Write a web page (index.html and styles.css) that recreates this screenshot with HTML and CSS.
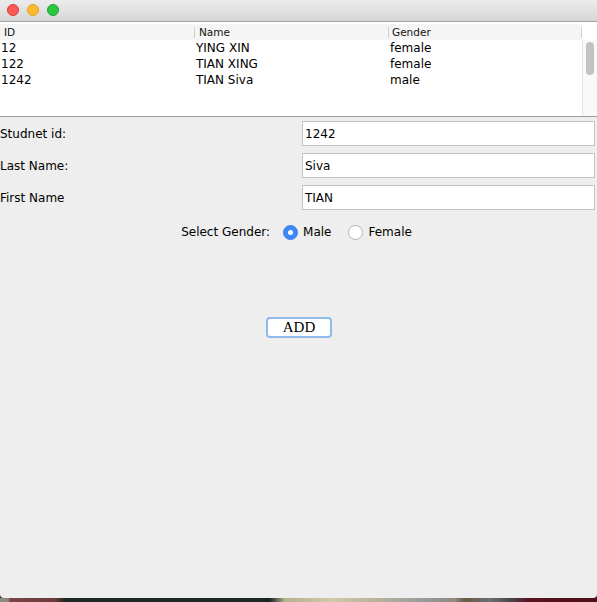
FILE: index.html
```html
<!DOCTYPE html>
<html>
<head>
<meta charset="utf-8">
<title>Student Form</title>
<link rel="stylesheet" href="styles.css">
</head>
<body>
<div class="desktop">
  <div class="window">
    <div class="titlebar">
      <span class="light red"></span>
      <span class="light yellow"></span>
      <span class="light green"></span>
    </div>
    <div class="scrollpane">
      <div class="table">
        <div class="thead">
          <div class="th">ID</div>
          <div class="th">Name</div>
          <div class="th">Gender</div>
        </div>
        <div class="tr"><div class="td">12</div><div class="td">YING XIN</div><div class="td">female</div></div>
        <div class="tr"><div class="td">122</div><div class="td">TIAN XING</div><div class="td">female</div></div>
        <div class="tr"><div class="td">1242</div><div class="td">TIAN Siva</div><div class="td">male</div></div>
      </div>
      <div class="vscroll"><div class="thumb"></div></div>
    </div>
    <div class="form">
      <div class="fields">
        <label class="label">Studnet id:</label>
        <div class="field">1242</div>
        <label class="label">Last Name:</label>
        <div class="field">Siva</div>
        <label class="label">First Name</label>
        <div class="field">TIAN</div>
      </div>
      <div class="gender">
        <span class="glabel">Select Gender:</span>
        <span class="radio checked"></span>
        <span class="rtext">Male</span>
        <span class="radio"></span>
        <span class="rtext">Female</span>
      </div>
      <div class="actions">
        <button class="add">ADD</button>
      </div>
    </div>
  </div>
  <div class="strip"></div>
</div>
</body>
</html>
```
FILE: styles.css
```css
* { box-sizing: border-box; }
html, body { margin: 0; padding: 0; }
body {
  width: 597px;
  height: 602px;
  overflow: hidden;
  background: #2a2a2a;
  font-family: "DejaVu Sans", "Liberation Sans", sans-serif;
  font-size: 12px;
  color: #000;
}
.desktop { display: flex; flex-direction: column; width: 597px; height: 602px; }
.window {
  width: 597px;
  height: 598px;
  background: #eeeeee;
  display: flex;
  flex-direction: column;
  border-radius: 0 0 4px 4px;
  overflow: hidden;
}
.strip {
  height: 4px;
  background: linear-gradient(90deg, #8a8a86 0px, #8a8a86 8px, #7a4444 10px, #6a3a3a 55px, #1d2824 65px, #1b2622 270px, #b8b090 285px, #cfc9a8 330px, #b5b19c 380px, #9c9c9c 420px, #8d8a84 455px, #6b5a40 465px, #6a7078 490px, #4a3a40 515px, #5a1222 530px, #4a0e1a 597px);
}
.titlebar {
  height: 22px;
  background: linear-gradient(#ececec, #d6d6d6);
  border-bottom: 1px solid #a3a3a3;
  display: flex;
  align-items: center;
  gap: 8px;
  padding: 0 0 1px 7px;
}
.light { width: 12px; height: 12px; border-radius: 50%; display: block; }
.red { background: #fc5753; border: 0.5px solid #df3d3a; }
.yellow { background: #fdbc2e; border: 0.5px solid #de9f22; }
.green { background: #2ac840; border: 0.5px solid #1ea630; }

.scrollpane {
  height: 95px;
  background: #fff;
  border-bottom: 1px solid #9c9c9c;
  display: grid;
  grid-template-columns: 582px 15px;
  padding-top: 2px;
}
.table { display: flex; flex-direction: column; }
.thead {
  display: grid;
  grid-template-columns: 195px 194px 193px;
  height: 16px;
  background: #f5f5f5;
}
.th {
  font-size: 10.5px;
  line-height: 16px;
  padding-left: 4px;
  color: #111;
  background: linear-gradient(#cfcfcf, #cfcfcf) right center / 1px 11px no-repeat;
}
.th:nth-child(3) { padding-left: 3px; }
.tr {
  display: grid;
  grid-template-columns: 195px 194px 193px;
  height: 16px;
}
.td { line-height: 16px; padding-left: 1px; white-space: nowrap; }
.vscroll {
  margin-top: 16px;
  background: #f9f9f9;
  border-left: 1px solid #e6e6e6;
  padding: 2px 0 0 3px;
}
.thumb {
  width: 8px;
  height: 33px;
  border-radius: 4px;
  background: #c2c2c2;
}

.form { display: flex; flex-direction: column; padding-top: 4px; }
.fields {
  display: grid;
  grid-template-columns: 302px 293px;
  grid-auto-rows: 25px;
  row-gap: 7px;
}
.label { display: flex; align-items: center; padding-left: 0; white-space: nowrap; }
.field {
  background: #fff;
  border: 1px solid #c3c3c3;
  display: flex;
  align-items: center;
  padding-left: 2px;
}
.gender {
  margin-top: 11px;
  height: 22px;
  display: flex;
  align-items: center;
  justify-content: center;
  padding-right: 4px;
}
.glabel { margin-right: 13px; }
.radio {
  width: 15px;
  height: 15px;
  border-radius: 50%;
  background: #fff;
  border: 1px solid #b3b3b3;
  margin-right: 5px;
  display: flex;
  align-items: center;
  justify-content: center;
}
.radio.checked { background: #3b88f6; border-color: #3a80ea; }
.radio.checked::after {
  content: "";
  width: 5px;
  height: 5px;
  border-radius: 50%;
  background: #fff;
}
.rtext { margin-right: 17px; }
.rtext:last-child { margin-right: 0; }
.actions { display: flex; justify-content: center; margin-top: 74px; padding-left: 1px; }
.add {
  width: 66px;
  height: 21px;
  background: #fff;
  border: 2px solid #8fbaec;
  border-radius: 4px;
  font-family: "Liberation Serif", serif;
  font-size: 15px;
  line-height: 15px;
  padding: 0;
  color: #000;
}
```
